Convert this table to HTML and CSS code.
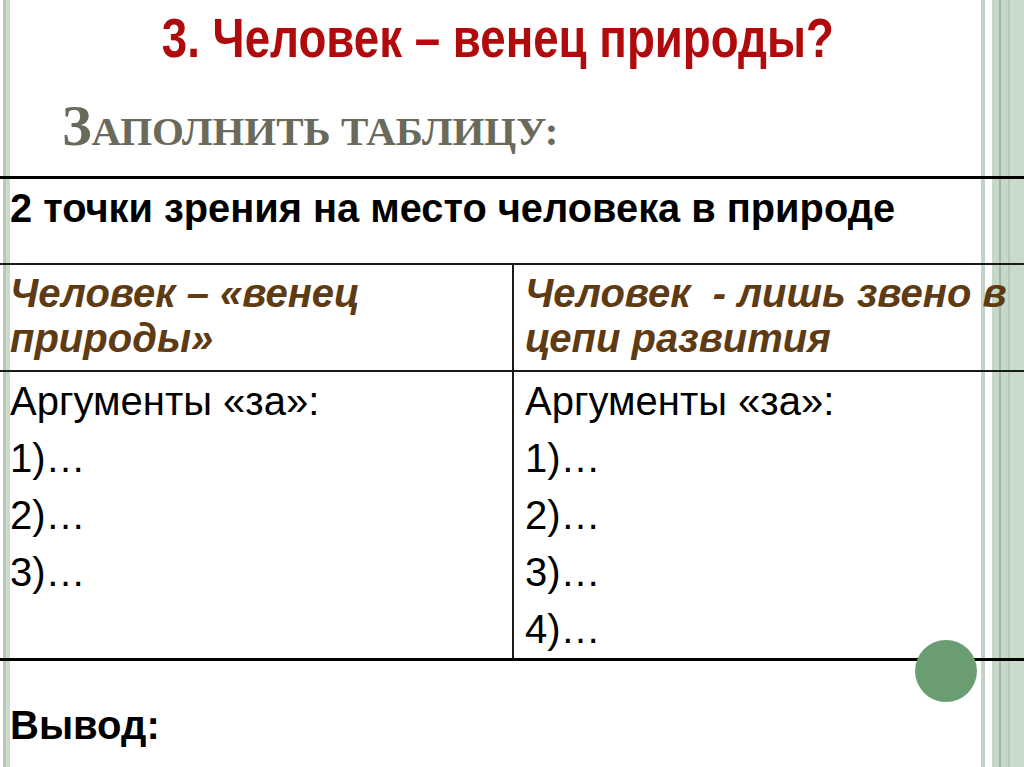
FILE: index.html
```html
<!DOCTYPE html>
<html lang="ru">
<head>
<meta charset="utf-8">
<title>Человек – венец природы?</title>
<link rel="stylesheet" href="styles.css">
</head>
<body>
<div class="slide">
  <header class="head">
    <h1 class="title"><span class="title-text">3. Человек – венец природы?</span></h1>
    <h2 class="subtitle"><span class="cap">З</span>аполнить таблицу:</h2>
  </header>
  <section class="table">
    <div class="row row-caption">
      <div class="cell">2 точки зрения на место человека в природе</div>
    </div>
    <div class="row row-views">
      <div class="cell view">Человек – «венец<br>природы»</div>
      <div class="cell view">Человек&nbsp; - лишь звено в<br>цепи развития</div>
    </div>
    <div class="row row-args">
      <div class="cell args">
        <p>Аргументы «за»:</p>
        <p>1)…</p>
        <p>2)…</p>
        <p>3)…</p>
      </div>
      <div class="cell args">
        <p>Аргументы «за»:</p>
        <p>1)…</p>
        <p>2)…</p>
        <p>3)…</p>
        <p>4)…</p>
      </div>
    </div>
  </section>
  <p class="conclusion">Вывод:</p>
  <span class="dot"></span>
</div>
</body>
</html>
```
FILE: styles.css
```css
html, body {
  margin: 0;
  padding: 0;
  background: #ffffff;
}

.slide {
  position: relative;
  width: 1024px;
  height: 767px;
  overflow: hidden;
  font-family: "Liberation Sans", Arial, sans-serif;
  color: #000;
  background:
    linear-gradient(to right,
      transparent 0 3px,
      #b7c8ba 3px 6px,
      #cbdacb 6px 10px,
      transparent 10px 981px,
      #c3d3c6 981px 985px,
      transparent 985px 992px,
      #c6d9c8 992px 999px,
      #9fb8a4 999px 1001px,
      #c6d9c8 1001px 1008px,
      #b4cab7 1008px 1010px,
      #c9dccb 1010px 1024px);
}

.head {
  display: flex;
  flex-direction: column;
  height: 176px;
  padding-top: 6px;
  box-sizing: border-box;
}

.title {
  margin: 0;
  font-family: "Liberation Sans Narrow", "Liberation Sans", Arial, sans-serif;
  font-weight: bold;
  font-size: 55px;
  line-height: 64px;
  color: #b00a0c;
  text-align: center;
  padding-right: 28px;
  white-space: nowrap;
}

.title-text {
  display: inline-block;
  transform: scaleX(0.83);
  transform-origin: center;
}

.subtitle {
  margin: 26px 0 0 62px;
  font-family: "Liberation Serif", "Times New Roman", serif;
  font-weight: bold;
  font-size: 41px;
  line-height: 60px;
  text-transform: uppercase;
  color: #6a6a5a;
}

.subtitle .cap {
  font-size: 56px;
}

.table {
  display: flex;
  flex-direction: column;
}

.row {
  display: flex;
}

.row-caption {
  border-top: 3px solid #000;
  height: 84px;
}

.row-caption .cell {
  font-weight: bold;
  font-size: 39.8px;
  line-height: 46px;
  padding: 6px 10px 0;
}

.row-views {
  border-top: 2px solid #1a1a1a;
  height: 105px;
}

.row-args {
  border-top: 2px solid #1a1a1a;
  border-bottom: 3px solid #000;
  height: 286px;
}

.row-views .cell,
.row-args .cell {
  flex: 0 0 512px;
  box-sizing: border-box;
}

.row-views .cell + .cell,
.row-args .cell + .cell {
  border-left: 2px solid #1a1a1a;
  padding-left: 11px;
}

.view {
  font-weight: bold;
  font-style: italic;
  font-size: 40px;
  line-height: 45px;
  color: #5e3b13;
  padding: 6px 10px 0;
}

.args {
  font-size: 40px;
  line-height: 57px;
  padding: 1px 10px 0;
}

.args p {
  margin: 0;
}

.conclusion {
  margin: 40px 0 0 10px;
  font-weight: bold;
  font-size: 40px;
  line-height: 48px;
}

.dot {
  position: absolute;
  left: 915px;
  top: 640px;
  width: 62px;
  height: 62px;
  border-radius: 50%;
  background: #6b9d72;
}
```
